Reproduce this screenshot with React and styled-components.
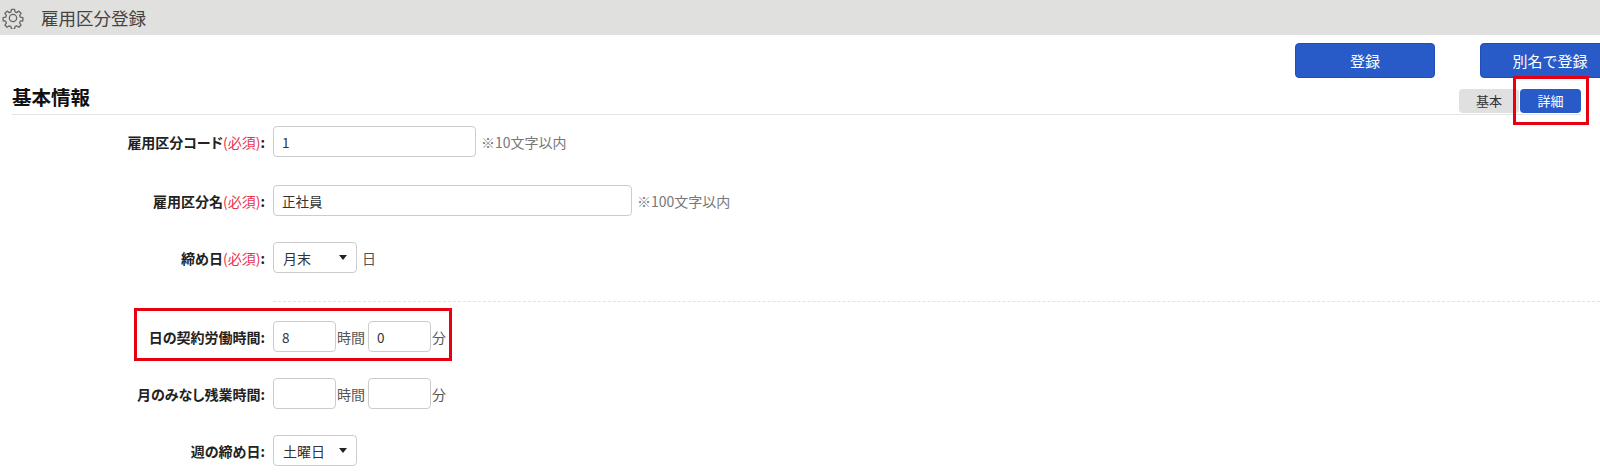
import styled, { createGlobalStyle } from "styled-components"

const GlobalStyle = createGlobalStyle`
  html, body {
    margin: 0;
    padding: 0;
    background: #fff;
    overflow: hidden;
    font-family: "Noto Sans CJK JP", "Liberation Sans", sans-serif;
  }
`

const Page = styled.div`
  position: relative;
  width: 1600px;
  height: 475px;
  overflow: hidden;
`

const TitleBar = styled.header`
  height: 35px;
  background: #e0e0de;
  display: flex;
  align-items: center;
  padding-left: 2px;
  color: #444;
  svg {
    width: 22px;
    height: 22px;
    color: #666;
  }
`

const PageTitle = styled.h1`
  margin: 0 0 0 17px;
  font-size: 17.5px;
  font-weight: 400;
  line-height: 35px;
`

const Actions = styled.div`
  display: flex;
  gap: 45px;
  padding: 8px 0 0 1295px;
  width: 1000px;
  height: 35px;
`

const ActionButton = styled.button`
  flex: none;
  width: 140px;
  height: 35px;
  padding: 0;
  border: 1px solid #1f50b5;
  border-radius: 4px;
  background: #285bc8;
  color: #fff;
  font: 15px "Noto Sans CJK JP", sans-serif;
`

const SectionHead = styled.div`
  display: flex;
  align-items: flex-end;
  justify-content: space-between;
  height: 36px;
  margin: 0 19px 0 12px;
  border-bottom: 1px solid #e4e4e4;
`

const SectionTitle = styled.h2`
  margin: 0 0 2px;
  font-size: 19.5px;
  font-weight: 700;
  line-height: 30px;
  color: #111;
`

const Tabs = styled.div`
  display: flex;
  gap: 1px;
  margin: 0 0 1px;
`

const Tab = styled.div`
  width: ${({ $active }) => ($active ? "61px" : "60px")};
  height: 24px;
  border-radius: 4px;
  background: ${({ $active }) => ($active ? "#285bc8" : "#e0e0e0")};
  color: ${({ $active }) => ($active ? "#fff" : "#333")};
  font-size: 13px;
  line-height: 24px;
  text-align: center;
`

const Form = styled.div`
  display: flex;
  flex-direction: column;
  padding-top: 11px;
  font-feature-settings: "palt";
`

const Row = styled.div`
  display: flex;
  align-items: center;
  height: 31px;
  margin-bottom: ${({ $gap }) => $gap}px;
`

const Label = styled.label`
  flex: none;
  width: 265px;
  font-size: 14px;
  font-weight: 700;
  color: #222;
  text-align: right;
  white-space: nowrap;
  margin-right: 8px;
`

const Required = styled.span`
  font-weight: 400;
  color: #e8344e;
`

const TextInput = styled.input`
  box-sizing: border-box;
  width: ${({ $width }) => $width}px;
  height: 31px;
  padding: 0 8px;
  border: 1px solid #ccc;
  border-radius: 4px;
  background: #fff;
  color: #333;
  font: 13.5px "Noto Sans CJK JP", sans-serif;
  outline: none;
`

const Select = styled.div`
  box-sizing: border-box;
  display: flex;
  align-items: center;
  justify-content: space-between;
  width: 84px;
  height: 31px;
  padding: 0 9px;
  border: 1px solid #ccc;
  border-radius: 4px;
  background: #fff;
  color: #333;
  font-size: 14px;
`

const Caret = styled.span`
  width: 0;
  height: 0;
  border-left: 4px solid transparent;
  border-right: 4px solid transparent;
  border-top: 5px solid #222;
`

const Unit = styled.span`
  font-size: 14px;
  color: #555;
  margin: 0 3px 0 ${({ $lead }) => $lead ?? 1}px;
`

const Hint = styled.span`
  font-size: 14px;
  color: #777;
  margin-left: 5px;
`

const Dashed = styled.div`
  margin: 0 0 19px 273px;
  border-top: 1px dashed #e2e2e2;
`

const Highlight = styled.div`
  position: absolute;
  box-sizing: border-box;
  left: ${({ $x }) => $x}px;
  top: ${({ $y }) => $y}px;
  width: ${({ $w }) => $w}px;
  height: ${({ $h }) => $h}px;
  border: 3px solid #e60012;
  pointer-events: none;
`

const GearIcon = () => (
  <svg viewBox="0 0 24 24" fill="none" stroke="currentColor" strokeWidth="1.4">
    <path d="M10.3 2.5h3.4l.5 2.8 1.8.8 2.4-1.6 2.4 2.4-1.6 2.4.8 1.8 2.8.5v3.4l-2.8.5-.8 1.8 1.6 2.4-2.4 2.4-2.4-1.6-1.8.8-.5 2.8h-3.4l-.5-2.8-1.8-.8-2.4 1.6-2.4-2.4 1.6-2.4-.8-1.8-2.8-.5v-3.4l2.8-.5.8-1.8-1.6-2.4 2.4-2.4 2.4 1.6 1.8-.8z" strokeLinejoin="round" />
    <circle cx="12" cy="12" r="4" />
  </svg>
)

const TimeFields = ({ hours, minutes }) => (
  <>
    <TextInput $width={63} defaultValue={hours} />
    <Unit>時間</Unit>
    <TextInput $width={63} defaultValue={minutes} />
    <Unit>分</Unit>
  </>
)

const App = () => (
  <Page>
    <GlobalStyle />
    <TitleBar>
      <GearIcon />
      <PageTitle>雇用区分登録</PageTitle>
    </TitleBar>
    <Actions>
      <ActionButton>登録</ActionButton>
      <ActionButton>別名で登録</ActionButton>
    </Actions>
    <SectionHead>
      <SectionTitle>基本情報</SectionTitle>
      <Tabs>
        <Tab>基本</Tab>
        <Tab $active>詳細</Tab>
      </Tabs>
    </SectionHead>
    <Form>
      <Row $gap={28}>
        <Label>雇用区分コード<Required>(必須)</Required>:</Label>
        <TextInput $width={203} defaultValue="1" />
        <Hint>※10文字以内</Hint>
      </Row>
      <Row $gap={26}>
        <Label>雇用区分名<Required>(必須)</Required>:</Label>
        <TextInput $width={359} defaultValue="正社員" />
        <Hint>※100文字以内</Hint>
      </Row>
      <Row $gap={28}>
        <Label>締め日<Required>(必須)</Required>:</Label>
        <Select>月末<Caret /></Select>
        <Unit $lead={5}>日</Unit>
      </Row>
      <Dashed />
      <Row $gap={26}>
        <Label>日の契約労働時間:</Label>
        <TimeFields hours="8" minutes="0" />
      </Row>
      <Row $gap={26}>
        <Label>月のみなし残業時間:</Label>
        <TimeFields />
      </Row>
      <Row $gap={0}>
        <Label>週の締め日:</Label>
        <Select>土曜日<Caret /></Select>
      </Row>
    </Form>
    <Highlight $x={1513} $y={76} $w={76} $h={49} />
    <Highlight $x={134} $y={308} $w={318} $h={53} />
  </Page>
)

export default App
